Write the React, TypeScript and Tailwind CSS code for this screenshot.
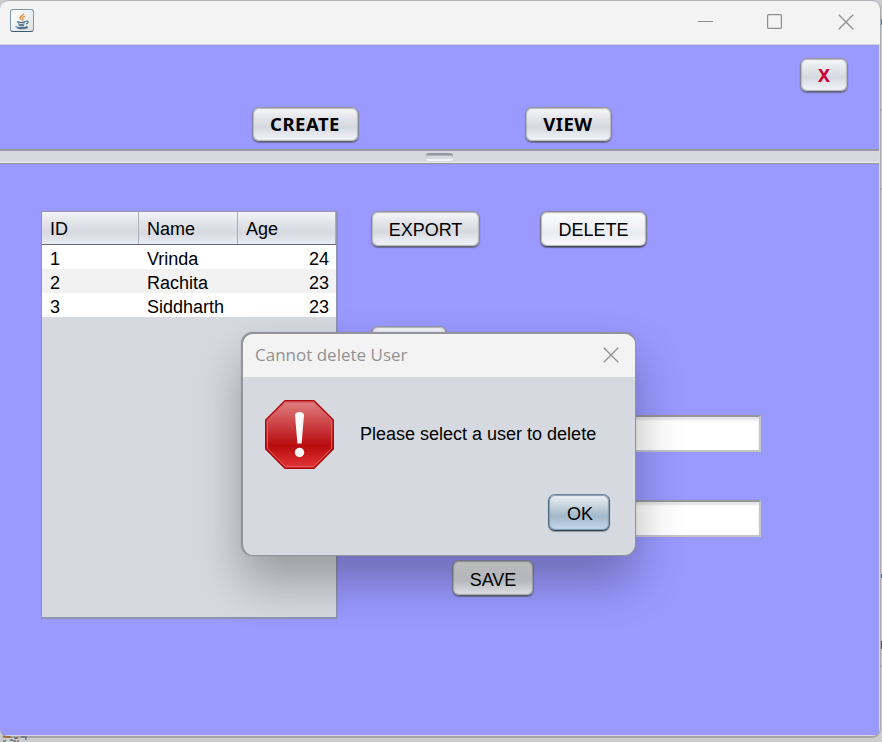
import type { ReactNode } from "react";

type ButtonProps = { children?: ReactNode; className: string; tone?: "normal" | "bright" | "primary" };

const tones = {
  normal:
    "border-x-[#85879a] border-t-[#9496a8] border-b-[#63666f] bg-[linear-gradient(#f7f8fa_0%,#e6e8ec_25%,#d5d8de_58%,#e0e3e9_72%,#f4f5fc_100%)] shadow-[inset_0_0_1px_1px_#b4b6bc,0_1px_1px_#6c6c9c]",
  bright:
    "border-x-[#777989] border-t-[#878999] border-b-[#484a51] bg-[linear-gradient(#fcfcfd_0%,#f3f4f7_35%,#e8ebf0_60%,#fafbff_100%)] shadow-[inset_0_0_1px_1px_#b4b6bc,0_1px_1px_#62628c]",
  primary:
    "border-x-[#4f687d] border-t-[#6c8499] border-b-[#253e56] bg-[linear-gradient(#eff3f6_0%,#c8d5df_30%,#a3b8c9_60%,#c5daec_100%)] shadow-[inset_0_0_1px_1px_#8499ab,0_1px_1px_#969ba3]",
};

function Button({ children, className, tone = "normal" }: ButtonProps) {
  return (
    <button
      className={`flex shrink-0 items-center justify-center rounded-[7px] border whitespace-nowrap ${tones[tone]} ${className}`}
    >
      {children}
    </button>
  );
}

function JavaIcon() {
  return (
    <div className="flex h-[23px] w-6 items-center justify-center rounded-[3px] border border-[#7d96aa] border-b-[#3e5a72] bg-linear-to-br from-white to-[#dfe1e3]">
      <svg width="20" height="20" viewBox="0 0 20 20" fill="none">
        <path d="M11.6 2.4c.8 2.4-4 3-2.6 5.2.3.7 1 1 1.2 1.7-1.5-1-3.3-2-2.3-3.5.9-1.3 3.5-1.7 3.7-3.4Z" fill="#ef822c" stroke="#ef822c" strokeWidth=".6" />
        <path d="M13 5.2c-1.6.7-2.8 1.2-2.2 2.3.4.7.5 1.3-.2 2" stroke="#ef822c" strokeWidth="1.1" />
        <path d="M5 10.6c2.2.9 6.3.9 8.5 0M6 12.7c2 .8 4.7.8 6.6 0M7 14.3c1.5.6 3.6.6 5 0M13.6 10.4c3-1.1 3.8 1.4.4 2.5M4.4 15.3c-2.7 1.1 8 2.2 11 .2M5.3 17.2c3.5.7 8 .5 10.7-.6" stroke="#54758f" strokeWidth="1.15" />
      </svg>
    </div>
  );
}

const Close = ({ className }: { className?: string }) => (
  <svg className={className} width="16" height="16" viewBox="0 0 16 16" fill="none">
    <path d="m.8.8 14.4 14.4M15.2.8.8 15.2" stroke="#8f8f8f" strokeWidth="1.3" />
  </svg>
);

function TitleBar() {
  return (
    <header className="flex h-11 shrink-0 items-start border-b border-[#d0d1e0] bg-[#f3f3f3] pl-2.5">
      <div className="mt-2">
        <JavaIcon />
      </div>
      <div className="mr-[26px] ml-auto flex pt-3">
        <svg width="15" height="16" viewBox="0 0 15 16">
          <path d="M0 8.5h15" stroke="#8e8e8e" />
        </svg>
        <svg className="ml-[54px]" width="15" height="16" viewBox="0 0 15 16" fill="none">
          <rect x=".6" y="1.6" width="13.8" height="13.8" rx="1" stroke="#8e8e8e" strokeWidth="1.2" />
        </svg>
        <Close className="mt-px ml-14" />
      </div>
    </header>
  );
}

const rows = [
  ["1", "Vrinda", "24"],
  ["2", "Rachita", "23"],
  ["3", "Siddharth", "23"],
];

function UserTable() {
  return (
    <div className="h-[408px] w-[297px] shrink-0 border border-r-2 border-b-2 border-[#9293b0] bg-[#d6d9df]">
      <div className="grid h-[33px] grid-cols-[97px_99px_98px] border-b border-[#656b78] bg-[linear-gradient(#f4f5f7_0%,#e1e3e8_35%,#d6d9df_65%,#eaecf3_100%)]">
        <span className="h-8 border-r border-[#aaaeb8] pl-2 leading-[35px]">ID</span>
        <span className="h-8 border-r border-[#aaaeb8] pl-2 leading-[35px]">Name</span>
        <span className="h-8 border-r border-[#aaaeb8] pl-2 leading-[35px]">Age</span>
      </div>
      {rows.map(([id, name, age]) => (
        <div key={id} className="grid h-6 grid-cols-[97px_99px_98px] bg-white leading-[29px] odd:bg-[#f2f2f2]">
          <span className="pl-2">{id}</span>
          <span className="pl-2">{name}</span>
          <span className="pr-[7px] text-right">{age}</span>
        </div>
      ))}
    </div>
  );
}

function TextField({ className }: { className: string }) {
  return (
    <input
      readOnly
      className={`block h-[37px] w-[310px] border-2 border-[#c3c4cc] border-t-[#96979e] bg-white shadow-[inset_0_3px_2px_#e5e5e5] outline-none ${className}`}
    />
  );
}

function Dialog() {
  return (
    <section className="absolute top-[332px] left-[241px] flex h-[224px] w-[395px] flex-col overflow-hidden rounded-[12px] border-2 border-r border-b border-[#94959c] bg-[#d6d9df] shadow-[0_0_1px_#777a88,0_26px_48px_rgba(0,0,0,0.29)]">
      <div className="flex h-[43px] shrink-0 items-center justify-between bg-[#f3f3f3] pr-4 pb-0.5 pl-3">
        <h1 className="text-[17px] whitespace-nowrap text-[#929292] [font-family:'Open_Sans',sans-serif]">Cannot delete User</h1>
        <Close />
      </div>
      <div className="flex pt-[23px] pl-[22px]">
        <svg width="69" height="69" viewBox="0 0 69 69">
          <defs>
            <linearGradient id="alert" x2="0" y2="1">
              <stop stopColor="#df8183" />
              <stop offset=".35" stopColor="#cc4245" />
              <stop offset=".67" stopColor="#b80c0f" />
              <stop offset="1" stopColor="#e53538" />
            </linearGradient>
          </defs>
          <path d="M20 .7h29L68.3 20v29L49 68.3H20L.7 49V20Z" fill="url(#alert)" stroke="#ae080c" strokeWidth="1.4" />
          <path d="M20.6 2.4h27.8l18.2 18.2v27.8L48.4 66.6H20.6L2.4 48.4V20.6Z" fill="none" stroke="#dc5f62" strokeWidth="1" />
          <path d="M30 15c0-4 9-4 9 0l-2.4 28.5h-4.2Z" fill="#fafafa" />
          <circle cx="34.5" cy="52.5" r="4.7" fill="#fafafa" />
        </svg>
        <p className="mt-[22px] ml-[26px] leading-6 whitespace-nowrap">Please select a user to delete</p>
      </div>
      <Button tone="primary" className="mt-[25px] ml-[305px] h-[37px] w-[62px]">
        <span className="pt-[3px] pl-0.5">OK</span>
      </Button>
    </section>
  );
}

export default function App() {
  return (
    <div className="relative h-[742px] w-[882px] overflow-hidden bg-[#cccccc] text-[18px] text-black [font-family:'Liberation_Sans',Arial,sans-serif]">
      <div className="flex h-[738px] w-[881px] flex-col overflow-hidden rounded-[9px] border-t border-r border-b-2 border-t-[#b2b2b2] border-r-[#aaaaaa] border-b-[#a5a5a5] bg-[#9999ff]">
        <TitleBar />
        <div className="flex min-h-0 flex-1 flex-col border-r border-b border-[#d8d8f0]">
          <div className="h-[104px] shrink-0 font-bold [font-family:'Noto_Sans',sans-serif]">
            <div className="flex justify-end pt-[13px] pr-[31px]">
              <Button className="h-[34px] w-12 text-[#cc0033]">X</Button>
            </div>
            <div className="flex pt-[15px] pl-[252px]">
              <Button className="h-[35px] w-[107px]"><span className="pr-px pb-0.5 text-[18.5px] tracking-[0.5px]">CREATE</span></Button>
              <Button className="ml-[166px] h-[35px] w-[87px]"><span className="pr-px pb-0.5 text-[18.5px] tracking-[0.5px]">VIEW</span></Button>
            </div>
          </div>
          <div className="flex h-[15px] shrink-0 justify-center border-t-2 border-b border-t-[#999aa8] border-b-[#9496a0] bg-[#d6d9df] shadow-[inset_0_-1px_#e9ebef]">
            <div className="mt-0.5 h-2 w-[27px] rounded-[3px] border-t-2 border-b-2 border-t-[#9496a0] border-b-[#f4f5f7] bg-[#d6d9df] shadow-[inset_0_1px_#b0b3bb]" />
          </div>
          <div className="flex pt-[47px] pl-[41px]">
            <UserTable />
            <div className="ml-[33px] w-[400px]">
              <div className="flex">
                <Button className="h-9 w-[109px]"><span className="pt-0.5">EXPORT</span></Button>
                <Button tone="bright" className="ml-[60px] h-9 w-[107px]"><span className="pt-0.5">DELETE</span></Button>
              </div>
              <Button className="mt-[79px] h-9 w-[76px]" />
              <TextField className="mt-[53px] ml-20" />
              <TextField className="mt-12 ml-20" />
              <Button className="mt-[23px] ml-[81px] h-9 w-[82px]"><span className="pt-1">SAVE</span></Button>
            </div>
          </div>
        </div>
      </div>
      <Dialog />
      <svg className="absolute top-0 left-[880px]" width="2" height="742" viewBox="0 0 2 742">
        <path d="M1 19h1v6H1zM1 574h1v4H1z" fill="#527a98" />
        <path d="M0 110h2M0 189h2M0 666h2" stroke="#999" />
        <path d="M1 641h1v8H1z" fill="#635333" />
      </svg>
      <svg className="absolute bottom-0 left-0" width="30" height="9" viewBox="0 0 30 9">
        <path d="M2 3h9v2H4zM15 4h3v2h-3z" fill="#95764a" />
        <path d="M3 8h3M10 7h3M14 5h2M17 8h2M21 4h5v3M13 8h3" fill="none" stroke="#68727b" strokeWidth="1.5" />
      </svg>
    </div>
  );
}
